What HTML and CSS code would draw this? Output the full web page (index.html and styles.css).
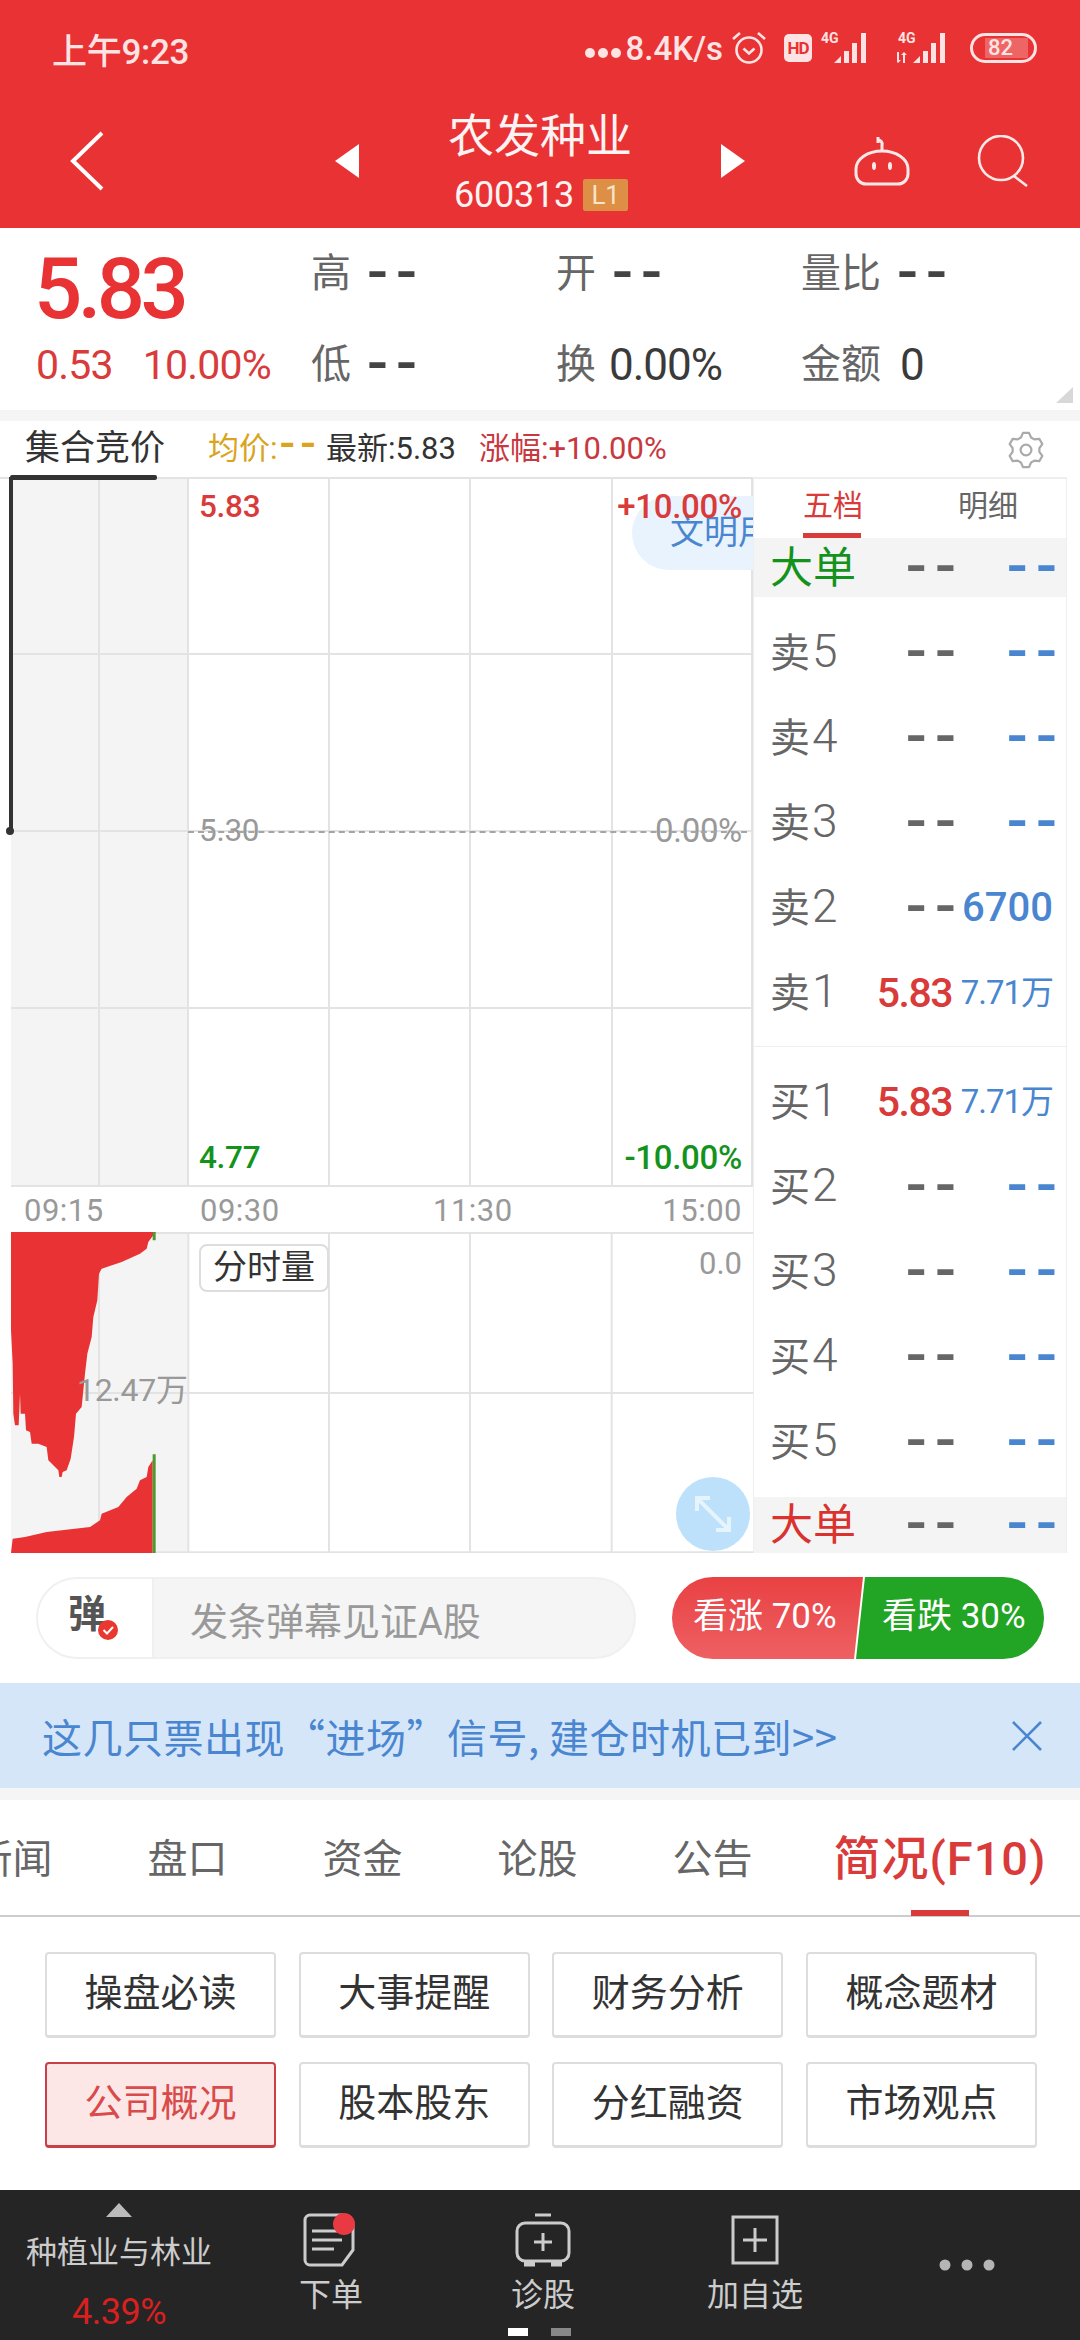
FILE: index.html
```html
<!DOCTYPE html>
<html lang="zh-CN">
<head>
<meta charset="utf-8">
<title>农发种业 600313</title>
<link rel="stylesheet" href="styles.css">
</head>
<body>
<div class="page">
  <header class="header">
    <div class="status">
      <span class="time">上午9:23</span>
      <div class="status-right">
        <span class="net"><i class="dot"></i><i class="dot"></i><i class="dot"></i><b class="speed">8.4K/s</b></span>
        <svg class="alarm" width="36" height="36" viewBox="0 0 36 36" fill="none" stroke="#fde3e3" stroke-width="2.6"><circle cx="18" cy="20" r="12.5"/><path d="M12.5 18.5l5.5 5 5.5-5"/><path d="M2 9l7-6M34 9l-7-6"/></svg>
        <span class="hd">HD</span>
        <span class="sig"><span class="g4">4G</span><svg width="40" height="30" viewBox="0 0 40 30" fill="#fde3e3"><path d="M0 30l7-7v7zM10 30V18h5v12zM18 30V10h5v20zM27 30V0h5v30z"/></svg></span>
        <span class="sig sig2"><span class="g4">4G</span><svg width="56" height="30" viewBox="0 0 56 30" fill="#fde3e3"><path d="M0 19h2v8h2l-3 3-3-3h2zM6 30v-8h-2l3-3 3 3H8v8zM16 30l7-7v7zM26 30V18h5v12zM34 30V10h5v20zM43 30V0h5v30z"/></svg></span>
        <span class="battery"><span class="battery-fill">82</span></span>
      </div>
    </div>
    <nav class="nav">
      <div class="nav-left">
        <svg width="34" height="60" viewBox="0 0 34 60" fill="none" stroke="#fff" stroke-width="4"><path d="M32 2L3 30l29 28"/></svg>
      </div>
      <div class="nav-center">
        <svg width="24" height="34" viewBox="0 0 24 34" fill="#fff"><path d="M24 0v34L0 17z"/></svg>
        <div class="title-block">
          <div class="stock-name">农发种业</div>
          <div class="stock-code"><span>600313</span><span class="level">L1</span></div>
        </div>
        <svg width="24" height="34" viewBox="0 0 24 34" fill="#fff"><path d="M0 0v34l24-17z"/></svg>
      </div>
      <div class="nav-right">
        <svg width="56" height="50" viewBox="0 0 56 50" fill="none" stroke="#fde8e8" stroke-width="3"><path d="M2 33a26 18 0 0 1 52 0v5a10 10 0 0 1-10 10H12A10 10 0 0 1 2 38z"/><path d="M28 15V9a4 4 0 0 0-4-5M24 1v6"/><ellipse cx="20" cy="30" rx="2" ry="4" fill="#fde8e8" stroke="none"/><ellipse cx="36" cy="30" rx="2" ry="4" fill="#fde8e8" stroke="none"/></svg>
        <svg width="54" height="52" viewBox="0 0 54 52" fill="none" stroke="#fde8e8" stroke-width="2.6"><circle cx="25" cy="23" r="22"/><path d="M38 41l13 10"/></svg>
      </div>
    </nav>
  </header>

  <section class="quote">
    <div class="price-col">
      <div class="price">5.83</div>
      <div class="change"><span>0.53</span><span>10.00%</span></div>
    </div>
    <div class="stats">
      <div class="stat"><span class="lab">高</span><span class="dash dash-dark">--</span></div>
      <div class="stat"><span class="lab">开</span><span class="dash dash-dark">--</span></div>
      <div class="stat"><span class="lab">量比</span><span class="dash dash-dark">--</span></div>
      <div class="stat"><span class="lab">低</span><span class="dash dash-dark">--</span></div>
      <div class="stat"><span class="lab">换</span><span class="val">0.00%</span></div>
      <div class="stat"><span class="lab">金额</span><span class="val val-amount">0</span></div>
    </div>
    <span class="corner"></span>
  </section>
  <div class="band"></div>

  <div class="chart-tabs">
    <div class="auction">集合竞价</div>
    <span class="leg leg-avg">均价:<span class="leg-dash">--</span></span>
    <span class="leg leg-new">最新:5.83</span>
    <span class="leg leg-up">涨幅:+10.00%</span>
    <svg class="gear" width="38" height="38" viewBox="0 0 24 24" fill="none" stroke="#aaa" stroke-width="1.4" stroke-linejoin="round"><polygon points="8.8,4.1 10.1,1.2 13.9,1.2 15.2,4.1 17.24,5.28 20.4,4.95 22.3,8.25 20.44,10.82 20.44,13.18 22.3,15.75 20.4,19.05 17.24,18.72 15.2,19.9 13.9,22.8 10.1,22.8 8.8,19.9 6.76,18.72 3.6,19.05 1.7,15.75 3.56,13.18 3.56,10.82 1.7,8.25 3.6,4.95 6.76,5.28"/><circle cx="12" cy="12" r="3.4"/></svg>
  </div>

  <section class="market">
    <div class="charts">
      <div class="main-chart">
        <svg class="chart-bg" width="753" height="710" viewBox="0 0 753 710">
          <rect x="11" y="0" width="177" height="710" fill="#f4f4f4"/>
          <g stroke="#e3e3e3" stroke-width="2" fill="none">
            <path d="M0 1H753M11 177H753M11 354H753M11 531H753M11 709H753"/>
            <path d="M99 0V710M188 0V710M329 0V710M470 0V710M612 0V710M752 0V710"/>
          </g>
          <path d="M11 0V354" stroke="#333" stroke-width="4"/>
          <circle cx="10" cy="354" r="4" fill="#333"/>
        </svg>
        <div class="civil">文明用语</div>
        <span class="tag tag-l up">5.83</span>
        <span class="tag tag-r up">+10.00%</span>
        <span class="tag tag-l mid gray">5.30</span>
        <span class="tag tag-r mid gray">0.00%</span>
        <span class="tag tag-l low down">4.77</span>
        <span class="tag tag-r low down">-10.00%</span>
        <div class="mid-line"></div>
      </div>
      <div class="axis">
        <span class="t1">09:15</span><span class="t2">09:30</span><span class="t3">11:30</span><span class="t4">15:00</span>
      </div>
      <div class="vol-chart">
        <svg class="chart-bg" width="753" height="321" viewBox="0 305 2259 963">
          <rect x="33" y="305" width="532" height="963" fill="#f4f4f4"/>
          <g stroke="#e3e3e3" stroke-width="6" fill="none">
            <path d="M33 308H2259M33 788H2259M33 1266H2259"/>
            <path d="M297 305V1268M565 305V1268M987 305V1268M1410 305V1268M1835 305V1268"/>
          </g>
          <path fill="#e93233" d="M33 305H467L445 335 440 355 420 370 365 395 305 415 297 430 292 510 280 560 275 620 262 670 255 730 245 830 228 850 222 920 212 985 200 1020 188 1025 185 1040 178 1040 175 1020 160 1005 145 990 140 950 115 940 95 940 90 905 78 900 75 850 62 850 60 790 56 885 45 885 40 850 38 700 33 600Z"/>
          <path fill="#e93233" d="M33 1268L38 1225 75 1220 140 1205 270 1190 300 1170 305 1150 355 1130 380 1100 410 1075 420 1050 440 1040 445 1010 458 990V1268Z"/>
          <path fill="#4f9a2e" d="M458 305H467V330H458ZM458 972H467V1268H458Z"/>
        </svg>
        <span class="vol-max">12.47万</span>
        <span class="vol-label">分时量</span>
        <span class="vol-zero">0.0</span>
        <span class="expand">
          <svg width="74" height="74" viewBox="0 0 74 74" fill="none" stroke="#e6f4fe" stroke-width="4"><path d="M21 21l32 32M21 34V21h13M53 40v13H40"/></svg>
        </span>
      </div>
    </div>

    <aside class="book">
      <div class="book-tabs">
        <span class="book-tab active">五档</span>
        <span class="book-tab">明细</span>
      </div>
      <div class="row big"><span class="big-lab down">大单</span><span class="dash">--</span><span class="dash blue">--</span></div>
      <div class="sells">
        <div class="row"><span class="r-lab">卖<span class="r-num">5</span></span><span class="dash">--</span><span class="dash blue">--</span></div>
        <div class="row"><span class="r-lab">卖<span class="r-num">4</span></span><span class="dash">--</span><span class="dash blue">--</span></div>
        <div class="row"><span class="r-lab">卖<span class="r-num">3</span></span><span class="dash">--</span><span class="dash blue">--</span></div>
        <div class="row"><span class="r-lab">卖<span class="r-num">2</span></span><span class="dash">--</span><span class="vol-strong">6700</span></div>
        <div class="row"><span class="r-lab">卖<span class="r-num">1</span></span><span class="r-price">5.83</span><span class="r-vol">7.71万</span></div>
      </div>
      <div class="buys">
        <div class="row"><span class="r-lab">买<span class="r-num">1</span></span><span class="r-price">5.83</span><span class="r-vol">7.71万</span></div>
        <div class="row"><span class="r-lab">买<span class="r-num">2</span></span><span class="dash">--</span><span class="dash blue">--</span></div>
        <div class="row"><span class="r-lab">买<span class="r-num">3</span></span><span class="dash">--</span><span class="dash blue">--</span></div>
        <div class="row"><span class="r-lab">买<span class="r-num">4</span></span><span class="dash">--</span><span class="dash blue">--</span></div>
        <div class="row"><span class="r-lab">买<span class="r-num">5</span></span><span class="dash">--</span><span class="dash blue">--</span></div>
      </div>
      <div class="row big"><span class="big-lab red">大单</span><span class="dash">--</span><span class="dash blue">--</span></div>
    </aside>
  </section>

  <section class="danmu">
    <div class="danmu-input">
      <div class="danmu-icon">
        <span class="dan">弹</span>
        <svg class="dan-check" width="22" height="22" viewBox="0 0 22 22"><circle cx="11" cy="11" r="10" fill="#e8382f"/><path d="M6.5 11l3.5 3.5 6-6.5" fill="none" stroke="#fff" stroke-width="2"/></svg>
      </div>
      <span class="placeholder">发条弹幕见证A股</span>
    </div>
    <div class="vote">
      <span class="vote-up">看涨 70%</span>
      <span class="vote-down">看跌 30%</span>
    </div>
  </section>

  <section class="ad">
    <span>这几只票出现“进场”信号, 建仓时机已到&gt;&gt;</span>
    <svg width="32" height="32" viewBox="0 0 32 32" fill="none" stroke="#4a86d0" stroke-width="2.6"><path d="M2 2l28 28M30 2L2 30"/></svg>
  </section>
  <div class="band band-2"></div>

  <div class="news-tabs">
    <span class="news-tab">新闻</span>
    <span class="news-tab">盘口</span>
    <span class="news-tab">资金</span>
    <span class="news-tab">论股</span>
    <span class="news-tab">公告</span>
    <span class="news-tab current">简况(F10)</span>
  </div>

  <div class="f10-grid">
    <span class="f10">操盘必读</span>
    <span class="f10">大事提醒</span>
    <span class="f10">财务分析</span>
    <span class="f10">概念题材</span>
    <span class="f10 on">公司概况</span>
    <span class="f10">股本股东</span>
    <span class="f10">分红融资</span>
    <span class="f10">市场观点</span>
  </div>

  <footer class="bottom">
    <div class="sector">
      <span class="sector-tri"></span>
      <span class="sector-name">种植业与林业</span>
      <span class="sector-pct">4.39%</span>
    </div>
    <div class="tool">
      <svg width="56" height="54" viewBox="0 0 56 54" fill="none" stroke="#ccc" stroke-width="3"><path d="M40 2H7a5 5 0 0 0-5 5v40a5 5 0 0 0 5 5h32l11-15V10"/><path d="M9 18h30M9 27h30M9 36h22"/><circle cx="41" cy="11" r="11" fill="#e93a44" stroke="none"/></svg>
      <span class="tool-name">下单</span>
    </div>
    <div class="tool">
      <svg width="56" height="54" viewBox="0 0 56 54" fill="none" stroke="#ccc" stroke-width="3"><path d="M20 2h16"/><rect x="2" y="10" width="52" height="38" rx="8"/><path d="M28 20v18M19 29h18"/><path d="M9 51h11M36 51h11" stroke-width="5"/></svg>
      <span class="tool-name">诊股</span>
    </div>
    <div class="tool">
      <svg width="56" height="54" viewBox="0 0 56 54" fill="none" stroke="#ccc" stroke-width="3"><rect x="6" y="4" width="44" height="46"/><path d="M28 15v24M16 27h24"/></svg>
      <span class="tool-name">加自选</span>
    </div>
    <div class="more">
      <svg width="56" height="12" viewBox="0 0 56 12" fill="#b5b5b5"><circle cx="6" cy="6" r="5.5"/><circle cx="28" cy="6" r="5.5"/><circle cx="50" cy="6" r="5.5"/></svg>
    </div>
    <div class="pager"><i class="pg pg-on"></i><i class="pg"></i></div>
  </footer>
</div>
</body>
</html>
```
FILE: styles.css
```css
* { box-sizing: border-box; }
html, body { margin: 0; padding: 0; background: #fff; }
body { font-family: Roboto, "Noto Sans CJK SC", sans-serif; }
.page { width: 1080px; height: 2340px; overflow: hidden; display: flex; flex-direction: column; position: relative; }

/* header */
.header { background: #e93233; height: 228px; color: #fff; flex: none; }
.status { height: 84px; padding: 12px 43px 0 52px; display: flex; align-items: center; justify-content: space-between; color: #fde3e3; }
.time { font-size: 35px; font-weight: 500; letter-spacing: -0.3px; }
.status-right { display: flex; align-items: center; }
.net { display: flex; align-items: center; }
.dot { width: 10px; height: 10px; border-radius: 50%; background: #fde3e3; margin-right: 3px; margin-top: 10px; }
.speed { font-weight: 500; font-size: 33px; margin-left: 2px; letter-spacing: 0; }
.alarm { margin-left: 8px; }
.hd { margin-left: 17px; width: 28px; height: 28px; background: #fde3e3; border-radius: 5px; color: #e93233; font-size: 17px; font-weight: 700; line-height: 28px; text-align: center; letter-spacing: -1px; }
.sig { position: relative; margin-left: 22px; display: flex; height: 30px; }
.sig2 { margin-left: 23px; }
.g4 { position: absolute; left: -13px; top: -2px; font-size: 14px; font-weight: 700; line-height: 14px; }
.sig2 .g4 { left: 1px; }
.battery { margin-left: 17px; width: 67px; height: 30px; border: 3px solid #fde3e3; border-radius: 15px; display: flex; align-items: center; padding: 2px 6px 2px 12px; }
.battery-fill { flex: 1; height: 20px; background: rgba(255,255,255,.25); color: #fde3e3; font-size: 22px; font-weight: 500; line-height: 20px; padding-left: 3px; }

.nav { height: 144px; padding-top: 10px; display: grid; grid-template-columns: 1fr auto 1fr; align-items: center; }
.nav-left { padding-left: 70px; display: flex; }
.nav-center { display: flex; align-items: center; width: 410px; justify-content: space-between; }
.title-block { display: flex; flex-direction: column; align-items: center; gap: 7px; }
.stock-name { font-size: 46px; line-height: 60px; color: #fdf3f3; white-space: nowrap; }
.stock-code { height: 44px; font-size: 36px; font-weight: 400; display: flex; align-items: center; gap: 9px; margin-left: 2px; color: #fdf3f3; letter-spacing: -0.2px; }
.level { width: 45px; height: 32px; background: #dc8f45; color: #f7e3c8; font-size: 26px; font-weight: 400; line-height: 32px; text-align: center; border-radius: 2px; }
.nav-right { display: flex; justify-content: flex-end; align-items: center; gap: 66px; padding-right: 50px; }

/* quote */
.quote { height: 182px; flex: none; position: relative; display: flex; padding-left: 36px; }
.price-col { width: 275px; }
.price { font-size: 85px; font-weight: 500; color: #e93233; line-height: 90px; margin-top: 16px; margin-left: -2px; letter-spacing: -4.6px; }
.change { display: flex; gap: 30px; font-size: 41px; line-height: 46px; margin-top: 8px; color: #d93a3a; letter-spacing: -0.8px; white-space: nowrap; }
.stats { display: grid; grid-template-columns: 245px 245px 245px; grid-auto-rows: 91px; align-content: start; }
.stat { display: flex; align-items: center; height: 91px; }
.lab { font-size: 40px; line-height: 50px; color: #666; margin-right: 13px; white-space: nowrap; }
.val { font-size: 44px; color: #3a3a3a; letter-spacing: -1px; line-height: 50px; }
.val-amount { margin-left: 6px; }
.corner { position: absolute; right: 7px; top: 159px; width: 17px; height: 16px; background: #d8d8d8; clip-path: polygon(100% 0, 100% 100%, 0 100%); }

.dash { font-size: 62px; line-height: 30px; height: 30px; color: #666; letter-spacing: 8px; font-weight: 500; text-align: right; margin-right: -12px; transform: translateY(-2px); white-space: nowrap; }
.dash-dark { color: #444; margin-right: 0; margin-left: 3px; }
.blue { color: #4a86d0; }

.band { height: 11px; flex: none; background: #f5f5f5; }
.band-2 { height: 12px; }

/* chart tabs */
.chart-tabs { height: 56px; flex: none; display: flex; align-items: center; padding-left: 25px; position: relative; z-index: 1; }
.auction { font-size: 35px; line-height: 44px; color: #333; width: 183px; white-space: nowrap; }
.auction::after { content: ""; position: absolute; left: 10px; bottom: -3px; width: 147px; height: 5px; background: #333; border-radius: 2px; }
.leg { font-size: 31px; line-height: 40px; letter-spacing: 0; white-space: nowrap; }
.leg-avg { color: #d9a520; width: 118px; }
.leg-dash { font-size: 46px; line-height: 20px; letter-spacing: 5px; font-weight: 500; margin-left: 2px; }
.leg-new { color: #333; width: 153px; }
.leg-up { color: #c8383f; }
.gear { position: absolute; left: 1007px; top: 10px; }

/* market */
.market { height: 1076px; flex: none; display: flex; }
.charts { width: 753px; flex: none; display: flex; flex-direction: column; }
.main-chart { height: 710px; position: relative; overflow: hidden; }
.chart-bg { position: absolute; left: 0; top: 0; display: block; }
.civil { position: absolute; left: 632px; top: 19px; width: 150px; height: 74px; background: #e9f3fd; border-radius: 37px 0 0 37px; color: #4a86d0; font-size: 34px; line-height: 72px; padding-left: 38px; white-space: nowrap; }
.tag { position: absolute; font-size: 31.5px; line-height: 36px; font-weight: 500; letter-spacing: -0.3px; }
.tag-l { left: 199px; }
.tag-r { right: 11px; font-size: 33px; }
.up { color: #d93a3a; top: 12px; }
.mid { top: 336px; }
.gray { color: #999; font-weight: 400; }
.low { top: 663px; }
.down { color: #14931c; }
.mid-line { position: absolute; left: 188px; right: 6px; top: 354px; border-top: 2px dashed #a5a5a5; }
.axis { height: 45px; flex: none; position: relative; font-size: 31px; line-height: 47px; color: #999; letter-spacing: 0.5px; }
.axis span { position: absolute; top: 0; }
.t1 { left: 24px; }
.t2 { left: 200px; }
.t3 { left: 433px; }
.t4 { right: 11px; }
.vol-chart { height: 321px; position: relative; }
.vol-max { position: absolute; left: 77px; top: 138px; font-size: 32px; line-height: 40px; color: #999; white-space: nowrap; letter-spacing: -0.3px; }
.vol-label { position: absolute; left: 199px; top: 12px; width: 130px; height: 48px; border: 2px solid #ddd; border-radius: 8px; background: #fff; color: #333; font-size: 34px; line-height: 42px; text-align: center; }
.vol-zero { position: absolute; right: 11px; top: 14px; font-size: 31px; line-height: 36px; color: #999; }
.expand { position: absolute; left: 676px; top: 245px; width: 74px; height: 74px; border-radius: 50%; background: #bde1fb; }
.expand svg { display: block; }

/* order book */
.book { width: 314px; flex: none; border-left: 1px solid #eee; border-right: 1px solid #eee; display: flex; flex-direction: column; }
.book-tabs { height: 61px; flex: none; display: grid; grid-template-columns: 156px 156px; border-top: 2px solid #eee; }
.book-tab { justify-self: center; font-size: 30px; line-height: 54px; height: 59px; color: #666; }
.book-tab.active { color: #d93a3a; border-bottom: 5px solid #d93a3a; width: 58px; white-space: nowrap; }
.row { height: 85px; display: grid; grid-template-columns: 1fr auto 101px; align-items: center; padding: 0 13px 0 16px; }
.big { height: 59px; background: #f4f4f4; flex: none; }
.big:last-child { height: 56px; margin-top: 13px; }
.sells { margin-top: 13px; padding-bottom: 11px; border-bottom: 1px solid #eee; flex: none; }
.buys { margin-top: 12px; flex: none; }
.big-lab { font-size: 43px; line-height: 50px; white-space: nowrap; }
.big-lab.down { color: #14931c; }
.big-lab.red { color: #d9322f; }
.r-lab { font-size: 40px; line-height: 50px; color: #666; white-space: nowrap; }
.r-num { font-size: 46px; font-weight: 300; margin-left: 2px; }
.r-price { font-size: 41px; line-height: 50px; font-weight: 500; color: #d93a3a; letter-spacing: -1.5px; }
.r-vol { font-size: 33px; line-height: 50px; color: #4a86d0; text-align: right; letter-spacing: -1px; white-space: nowrap; }
.vol-strong { font-size: 40px; line-height: 50px; font-weight: 500; color: #4a86d0; text-align: right; }

/* danmu */
.danmu { height: 130px; flex: none; display: flex; align-items: center; padding: 0 36px; gap: 36px; }
.danmu-input { width: 600px; height: 82px; border-radius: 41px; border: 2px solid #f0f0f0; background: #f5f5f5; display: flex; align-items: center; overflow: hidden; }
.danmu-icon { width: 116px; height: 100%; background: #fff; border-right: 2px solid #f0f0f0; position: relative; padding-left: 30px; display: flex; align-items: center; flex: none; }
.dan { font-size: 38px; font-weight: 700; line-height: 44px; color: #555; margin-top: -8px; }
.dan-check { position: absolute; left: 59px; top: 40px; }
.placeholder { font-size: 38px; color: #999; margin-left: 36px; white-space: nowrap; letter-spacing: 0; }
.vote { width: 372px; height: 82px; border-radius: 41px; overflow: hidden; display: flex; font-size: 35px; line-height: 80px; color: #fff; white-space: nowrap; }
.vote-up { width: 191px; flex: none; background: linear-gradient(#e94143, #ee6063); padding-left: 21px; clip-path: polygon(0 0, 100% 0, calc(100% - 9px) 100%, 0 100%); }
.vote-down { flex: 1; margin-left: -7px; background: #22a424; padding-left: 26px; clip-path: polygon(9px 0, 100% 0, 100% 100%, 0 100%); }

/* ad */
.ad { height: 105px; flex: none; background: #d6e6f9; display: flex; align-items: center; justify-content: space-between; padding: 0 37px 0 42px; color: #4a86d0; font-size: 40px; letter-spacing: 0.5px; font-family: "Noto Sans CJK SC", sans-serif; white-space: nowrap; }

/* news tabs */
.news-tabs { height: 117px; flex: none; display: flex; margin-left: -75px; border-bottom: 2px solid #ccc; width: 1155px; }
.news-tab { width: 175px; flex: none; text-align: center; font-size: 40px; line-height: 120px; color: #666; }
.news-tab.current { width: 280px; color: #d93a3a; font-size: 47px; font-weight: 500; position: relative; line-height: 118px; letter-spacing: 1px; white-space: nowrap; }
.news-tab.current::after { content: ""; position: absolute; left: 111px; bottom: -1px; width: 58px; height: 6px; background: #d93a3a; }

/* f10 grid */
.f10-grid { display: grid; grid-template-columns: repeat(4, 231px); column-gap: 22.7px; row-gap: 24px; padding: 35px 0 0 45px; flex: none; }
.f10 { height: 86px; border: 2px solid #ddd; border-bottom-width: 3px; border-radius: 4px; font-size: 38px; line-height: 78px; text-align: center; color: #333; }
.f10.on { border-color: #c84048; background: #fde6e6; color: #d94a4a; }

/* bottom */
.bottom { position: absolute; left: 0; bottom: 0; width: 1080px; height: 150px; background: #252525; display: flex; padding-left: 13px; color: #ccc; }
.sector { width: 212px; flex: none; display: flex; flex-direction: column; align-items: center; padding-top: 13px; }
.sector-tri { width: 26px; height: 14px; background: #bbb; clip-path: polygon(50% 0, 100% 100%, 0 100%); }
.sector-name { font-size: 31px; line-height: 40px; margin-top: 16px; white-space: nowrap; }
.sector-pct { font-size: 36px; line-height: 40px; margin-top: 19px; color: #d92020; letter-spacing: -0.5px; }
.tool { width: 212px; flex: none; display: flex; flex-direction: column; align-items: center; padding-top: 23px; }
.tool svg { display: block; }
.tool-name { font-size: 32px; line-height: 40px; margin-top: 8px; white-space: nowrap; }
.more { width: 212px; flex: none; display: flex; justify-content: center; padding-top: 69px; }
.more svg { display: block; }
.pager { position: absolute; left: 508px; top: 138px; display: flex; gap: 23px; }
.pg { width: 20px; height: 8px; background: #888; }
.pg-on { background: #fff; }
```
